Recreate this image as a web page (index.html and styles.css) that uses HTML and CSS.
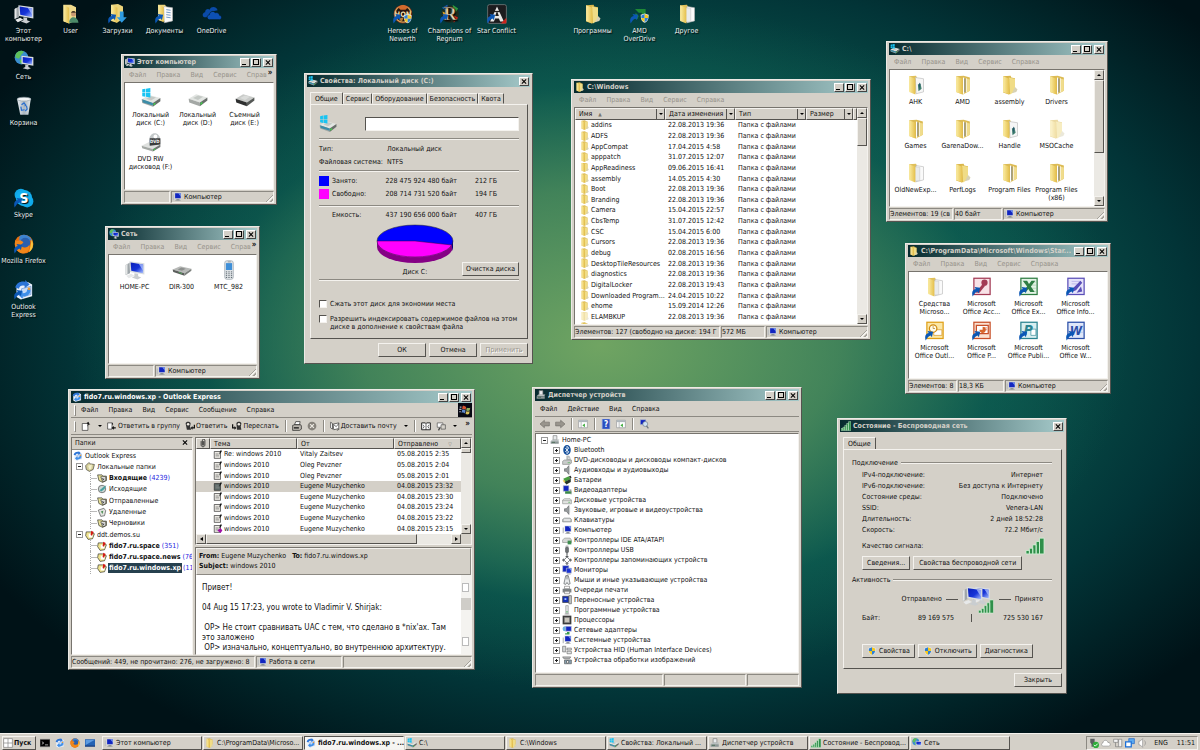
FILE: index.html
```html
<!DOCTYPE html>
<html lang="ru">
<head>
  <meta charset="UTF-8">
  <meta name="viewport" content="width=device-width, initial-scale=1">
  <title>Рабочий стол</title>
  <link rel="stylesheet" href="styles.css">
</head>
<body>

<!-- icons -->
<svg class="sprite" width="0" height="0" aria-hidden="true">
  <defs>
    <linearGradient id="gScreen" x1="0" y1="0" x2="1" y2="1"><stop offset="0" stop-color="#0a1fb8"/><stop offset=".55" stop-color="#1634d8"/><stop offset="1" stop-color="#a9c0ff"/></linearGradient>
    <linearGradient id="gFold" x1="0" y1="0" x2="1" y2="0"><stop offset="0" stop-color="#fbeda4"/><stop offset="1" stop-color="#e4bf4c"/></linearGradient>
    <linearGradient id="gGlass" x1="0" y1="0" x2="1" y2="0"><stop offset="0" stop-color="#e9eef2"/><stop offset=".5" stop-color="#a9b6c0"/><stop offset="1" stop-color="#dfe6ea"/></linearGradient>
  </defs>

  <symbol id="shortcut" viewBox="0 0 32 32"><path d="M1 31c-2-7 0-11 5-12l-2-3 9 1-2 9-2-3c-4 1-5 4-8 8z" fill="#0b57b5"/></symbol>
  <symbol id="shield" viewBox="0 0 16 16"><path d="M8 1l6 2c0 6-1 10-6 12C3 13 2 9 2 3z" fill="#e8e8e8"/><path d="M8 2v6H3V4z" fill="#2b7fd6"/><path d="M8 2l5 2v4H8z" fill="#f6c81e"/><path d="M3 8h5v6C5 13 3.500 11 3 8z" fill="#f6c81e"/><path d="M8 8h5c-.5 3-2 5-5 6z" fill="#2b7fd6"/></symbol>

  <symbol id="pc" viewBox="0 0 32 32">
    <path d="M1 8l7-4v17l-7 3z" fill="#9fa6aa"/><path d="M1 8l3-2v16l-3 2z" fill="#e4e6e6"/>
    <path d="M7 2l24 3v18L8 19z" fill="#d9dde0"/><path d="M9 4l20 3v14L10 17z" fill="url(#gScreen)"/><path d="M22 6l7 1v10z" fill="#b9ccff" opacity=".7"/>
    <path d="M15 21l6 1v4l5 2-6 3-9-3 4-2z" fill="#c9cdd0"/><path d="M2 25l8-3 5 3-9 4z" fill="#e7e9ea"/>
  </symbol>
  <symbol id="net" viewBox="0 0 32 32">
    <circle cx="12" cy="12" r="11" fill="#3b8ed0"/><path d="M3 6c4-6 10-6 13-3l-4 4-4 7-6-2zM9 15l7 1-2 6-4-1z" fill="#5fc05a"/>
    <path d="M12 9l19 2v14l-19-3z" fill="#d9dde0"/><path d="M14 11l15 2v10l-15-3z" fill="url(#gScreen)"/><path d="M18 23l5 1v3l4 2-5 2-8-2 4-2z" fill="#c9cdd0"/>
  </symbol>
  <symbol id="bin" viewBox="0 0 32 32">
    <path d="M5 5l22-1-4 26H10z" fill="url(#gGlass)"/><ellipse cx="16" cy="5" rx="11" ry="3" fill="#f2f5f6" stroke="#8f9ba3"/>
    <path d="M12 14l4-3 3 4-2 1M11 17l1 6 5-1M20 16l1 5-3 3" fill="none" stroke="#2a70cf" stroke-width="2"/>
  </symbol>
  <symbol id="folder" viewBox="0 0 32 32">
    <path d="M5 2l12-1 1 3 6 1v21l-10 5-9-3z" fill="#d9b548"/><path d="M14 4l10 2v20l-8 5z" fill="#f0dc86"/><path d="M5 2l10 4v25L5 27z" fill="url(#gFold)"/><path d="M24 19l4 4-2 4-7 2z" fill="#d8d2b4"/>
  </symbol>
  <symbol id="folder-docs" viewBox="0 0 32 32">
    <path d="M5 2l11-1 2 4-3 24-10-3z" fill="#e0c05a"/><path d="M16 4l12 2v21l-12 3z" fill="#fafafa" stroke="#b9b9b9"/><path d="M14 6l8 1v21l-8 1z" fill="#e9ebec" stroke="#b5b5b5" stroke-width=".6"/><path d="M5 2l10 4v25L5 27z" fill="url(#gFold)"/>
  </symbol>
  <symbol id="folder-app" viewBox="0 0 32 32">
    <path d="M5 2l11-1 2 4-3 24-10-3z" fill="#e0c05a"/><path d="M15 4l13 2v21l-12 3z" fill="#f6f6f6" stroke="#b9b9b9"/><path d="M19 15l4-2 2 9-5 4z" fill="#3f7f6e"/><path d="M21 12l2 3-2 9z" fill="#27506f"/><path d="M5 2l10 4v25L5 27z" fill="url(#gFold)"/>
  </symbol>
  <symbol id="folder-full" viewBox="0 0 32 32">
    <path d="M5 2l12-1 10 3v21l-11 6-11-4z" fill="#dcbb54"/><path d="M16 4l2 .5v25l-2 1zM21 5l1.500.5V27l-1.500 1z" fill="#fff"/><path d="M18 5l2 1v21l-2 1z" fill="#8b8f86"/><path d="M22 6l5 1v18l-5 3z" fill="#f0dc8c"/><path d="M5 2l10 4v25L5 27z" fill="url(#gFold)"/>
  </symbol>
  <symbol id="folder-user" viewBox="0 0 32 32">
    <path d="M4 1h12l8 4v21l-11 5-9-3z" fill="#f0da8c"/><path d="M4 1l9 5v25l-9-4z" fill="url(#gFold)"/><circle cx="20" cy="16" r="4" fill="#c99a72"/><path d="M16 14c1-4 7-4 8 0z" fill="#4a3a26"/><path d="M13 30c0-12 14-12 15 0z" fill="#4b8a68"/>
  </symbol>
  <symbol id="downloads" viewBox="0 0 32 32">
    <path d="M5 1l11-1 8 4v20l-10 6-9-3z" fill="#ecd47a"/><path d="M5 1l10 5v24l-10-4z" fill="url(#gFold)"/><path d="M19 12h6v9h5l-8 9-8-9h5z" fill="#2e9be0"/><use href="#shortcut"/>
  </symbol>
  <symbol id="documents" viewBox="0 0 32 32">
    <path d="M5 1h11l2 3v24l-12-2z" fill="#ecd47a"/><path d="M14 4l14 2v21l-13 3z" fill="#fafafa" stroke="#b9b9b9"/><path d="M18 9l7 1M18 13l7 1M18 17l7 1M18 21l7 1" stroke="#6c93c4" stroke-width="1.500"/><path d="M5 1l9 4v24l-9-4z" fill="url(#gFold)"/><use href="#shortcut"/>
  </symbol>
  <symbol id="onedrive" viewBox="0 0 32 32">
    <path d="M4 21c-4-1-4-7 1-8 0-5 5-6 7-4 3-6 11-5 13 1l-9 2-5 9z" fill="#0a4aa8"/><path d="M12 25c-5 0-5-7 0-8 0-5 7-7 9-3 4-1 7 1 7 4 5 1 4 7 0 7z" fill="#0d50b4" stroke="#021a1c"/>
  </symbol>
  <symbol id="starconf" viewBox="0 0 32 32">
    <rect x="1" y="1" width="30" height="30" rx="3" fill="#1c1c1e" stroke="#909090"/><path d="M16 4l11 24h-6l-2-5h-6l-2 5H5z" fill="#e9e9e6"/><path d="M16 11l3 8h-6z" fill="#1c1c1e"/><path d="M22 31h9v-9z" fill="#c9251c"/><path d="M7 12h18" stroke="#1c1c1e" stroke-width="2"/><use href="#shortcut"/>
  </symbol>
  <symbol id="amd" viewBox="0 0 32 32"><path d="M8 8h17v16l-6-6v-4h-5z" fill="#1f8a36"/><path d="M9 14l5 5-2 5H8z" fill="#1f8a36"/><use href="#shortcut"/><use href="#shield" x="15" y="14" width="17" height="17"/></symbol>
  <symbol id="firefox" viewBox="0 0 32 32"><circle cx="16" cy="16" r="15" fill="#e8700e"/><path d="M9 3c9-5 19 1 20 9-2-3-5-2-6 1-3-3-9-1-10 3-2-1-5-2-5-4z" fill="#3d83cf"/><circle cx="18" cy="14" r="8" fill="#2a5fae"/><path d="M2 9c1 3 5 2 7 1 3 0 4 2 6 3-1 3-5 3-4 6 3 4 10 4 13-1 2 7-3 13-10 13C4 30 0 19 2 9z" fill="#f0861a"/><path d="M28 9c4 6 3 15-4 20 2-6 3-13 4-20z" fill="#f9c63d"/></symbol>
  <symbol id="oexpress" viewBox="0 0 32 32"><path d="M4 9l18-6 7 4v19l-18 5-7-4z" fill="#e9f0fb"/><path d="M12 14l15-4v13l-15 5z" fill="#c7dbf6" stroke="#5d8cd0"/><path d="M2 12C4 4 12 1 18 3V0l7 7-8 6V9c-5-1-8 0-9 5z" fill="#2b74d6"/><path d="M26 14c2 8-5 13-12 12v4l-8-7 8-6v4c5 0 7-2 7-6z" fill="#3f8fe8"/><path d="M22 12h4v4h-4z" fill="#e69a3a"/></symbol>

  <symbol id="drive" viewBox="0 0 32 32"><path d="M1 17l12-7 18 5-12 8z" fill="#e2e5e2"/><path d="M1 17l18 6v6L2 23z" fill="#a4a8a5"/><path d="M19 23l12-8v5l-12 9z" fill="#686d6a"/><path d="M8 16l8-4 8 2-8 5z" fill="#c4c9c5"/><path d="M20 24l3-2v3l-3 2z" fill="#3fd24a"/></symbol>
  <symbol id="windrive" viewBox="0 0 32 32"><use href="#drive" y="1"/><path d="M2 18l17 6v4L3 23z" fill="#3c8da8"/><path d="M2 2l5-1v6H2zM8 1l7-1v7H8zM2 8h5v6l-5-1zM8 8h7v7l-7-1z" fill="#19c3f2"/></symbol>
  <symbol id="drive-dark" viewBox="0 0 32 32"><path d="M1 17l12-7 18 5-12 8z" fill="#c9cbc9"/><path d="M1 17l18 6v6L2 23z" fill="#2e2f2f"/><path d="M19 23l12-8v5l-12 9z" fill="#555856"/><path d="M8 16l8-4 8 2-8 5z" fill="#dadcda"/></symbol>
  <symbol id="router" viewBox="0 0 32 32"><path d="M1 15l12-5 18 4-11 7z" fill="#b8bab8"/><path d="M1 15l19 6v4L2 19z" fill="#5b5e5c"/><path d="M20 21l11-7v3l-11 8z" fill="#7c807d"/><path d="M9 15l6-3 7 2-6 3z" fill="#8d908e"/><path d="M11 19l5 2v1l-5-2z" fill="#4bdc5c"/></symbol>
  <symbol id="phone" viewBox="0 0 32 32"><rect x="9" y="1" width="14" height="30" rx="4" fill="#dfe3e6" stroke="#98a2aa"/><rect x="11" y="5" width="10" height="11" fill="#3f8fd8"/><path d="M11 19h10M11 22h10M11 25h10M11 28h10" stroke="#5a646c" stroke-width="1.500" stroke-dasharray="2 2"/><path d="M14 3h5" stroke="#6c757d"/></symbol>

  <symbol id="o-access" viewBox="0 0 32 32"><rect x="3" y="2" width="26" height="26" fill="#f8e2e7" stroke="#a33b55" stroke-width="2"/><circle cx="20" cy="9" r="5" fill="#a33b55"/><path d="M17 11L6 25h6l9-11z" fill="#a33b55"/><use href="#shortcut"/></symbol>
  <symbol id="o-excel" viewBox="0 0 32 32"><rect x="3" y="2" width="26" height="26" fill="#e4f3e6" stroke="#2e7d43" stroke-width="2"/><path d="M20 8h7M20 13h7M20 18h7M20 23h7" stroke="#9ccaa4"/><path d="M6 6h7l3 5 4-5h6l-7 9 6 9h-7l-3-5-4 5H6l7-9z" fill="#2e7d43"/><use href="#shortcut"/></symbol>
  <symbol id="o-info" viewBox="0 0 32 32"><rect x="3" y="2" width="26" height="26" fill="#e6e3fa" stroke="#5a4eb8" stroke-width="2"/><path d="M9 7h14M9 11h9" stroke="#a9a2e0"/><path d="M23 6l3 3-10 12-5 2 1-6zM24 15l2 8-9 2z" fill="#5a4eb8"/><use href="#shortcut"/></symbol>
  <symbol id="o-outlook" viewBox="0 0 32 32"><rect x="3" y="2" width="26" height="26" fill="#fbe7a6" stroke="#e0a018" stroke-width="2"/><path d="M14 14h13v9H14z" fill="#fff" stroke="#d08a10"/><circle cx="13" cy="12" r="6" fill="#fffbe8" stroke="#d08a10" stroke-width="2"/><path d="M13 8v4h3" stroke="#a86c08" fill="none"/><use href="#shortcut"/></symbol>
  <symbol id="o-ppt" viewBox="0 0 32 32"><rect x="3" y="2" width="26" height="26" fill="#fbe2d2" stroke="#c8502a" stroke-width="2"/><path d="M7 7h19v13H7z" fill="#fff" stroke="#c8502a" stroke-width="2"/><path d="M17 9a5 5 0 1 1-5 5h5z" fill="#d9682c"/><path d="M19 11h5M20 14h4" stroke="#c8502a"/><use href="#shortcut"/></symbol>

  <symbol id="monitor" viewBox="0 0 16 16"><path d="M1 4h2v9H1z" fill="#b9bdc0"/><path d="M4 1h11v10H4z" fill="#d5d9dc"/><path d="M5 2h9v8H5z" fill="#1226c0"/><path d="M10 2h4v5z" fill="#7d9cf0"/><path d="M7 11h5v2H7zM5 13h9v1H5z" fill="#8f9498"/></symbol>
  <symbol id="signal" viewBox="0 0 16 16"><path d="M0 12h3v3H0zM3 10h3v5H3zM6 7h3v8H6zM9 4h3v11H9zM12 1h4v14h-4z" fill="#2f8f4a" stroke="#d3f3d8" stroke-width=".7"/></symbol>
  <symbol id="devroot" viewBox="0 0 16 16"><path d="M5 1h6v7H5z" fill="#e8ebec" stroke="#777"/><path d="M1 9l3-2h11l-2 3z" fill="#b9c0c0"/><path d="M1 10h13v4H1z" fill="#8b9696"/><path d="M3 11h5v1H3z" fill="#2d5a38"/></symbol>
  <symbol id="winlogo" viewBox="0 0 16 16"><path d="M1 1h14v14H1z" fill="#fff" stroke="#777"/><path d="M8 1v14M1 8h14" stroke="#777"/></symbol>

  <symbol id="d-bt" viewBox="0 0 16 16"><ellipse cx="8" cy="8" rx="6" ry="8" fill="#16509c"/><path d="M5 5l6 6-3 3V2l3 3-6 6" fill="none" stroke="#fff" stroke-width="1.200"/></symbol>
  <symbol id="d-dvd" viewBox="0 0 16 16"><path d="M7 1c5-1 7 2 7 8H7z" fill="#b8bcbc"/><circle cx="11" cy="5" r="1" fill="#fff"/><path d="M1 10l3-2h11v5l-3 2H1z" fill="#c9cccb" stroke="#838786"/><path d="M9 12h4v1H9z" fill="#3faf48"/></symbol>
  <symbol id="d-audio" viewBox="0 0 16 16"><path d="M4 6h3l4-5v14l-4-5H4z" fill="#999d9f" stroke="#5d6163"/><path d="M11 3l2 1v8l-2 1z" fill="#c9cdce"/></symbol>
  <symbol id="d-batt" viewBox="0 0 16 16"><path d="M2 6l9-4 3 4-9 5z" fill="#4a9f40"/><path d="M4 11l10-5v5l-7 4z" fill="#26352a"/><path d="M1 8l4 1-1 4z" fill="#e4c13a"/><path d="M11 2l3-1 1 3-1 2z" fill="#333"/></symbol>
  <symbol id="d-video" viewBox="0 0 16 16"><path d="M2 1h9v9H2z" fill="#1226c0" stroke="#c4c8cc"/><path d="M5 10h10v4H5z" fill="#3a8a48"/><path d="M12 7h3v8h-1V9h-2z" fill="#888"/></symbol>
  <symbol id="d-mon" viewBox="0 0 16 16"><path d="M1 1h10v10H1z" fill="#1226c0" stroke="#c4c8cc"/><path d="M7 5h8v8H7z" fill="#1a34d4" stroke="#c4c8cc"/><path d="M11 5h4v4z" fill="#7d9cf0"/><path d="M8 14h6v1H8z" fill="#888"/></symbol>
  <symbol id="d-disk" viewBox="0 0 16 16"><path d="M1 8l3-2h9l2 2v6H1z" fill="#e2e4e2" stroke="#8a8e8b"/><path d="M1 9h14" stroke="#9ba09c"/><path d="M10 11h3v1h-3z" fill="#3faf48"/></symbol>
  <symbol id="d-key" viewBox="0 0 16 16"><path d="M1 7l3-2h9l2 2v4H1z" fill="#c0c4c4" stroke="#7b8080"/><path d="M3 7h10M3 9h10" stroke="#fff"/></symbol>
  <symbol id="d-ide" viewBox="0 0 16 16"><path d="M1 8l3-3h9l2 3v4H1z" fill="#d6d8d6" stroke="#8a8e8b"/><path d="M9 9h6v6H9z" fill="#3f8f50"/></symbol>
  <symbol id="d-usb" viewBox="0 0 16 16"><path d="M6 1h4v3h1v7l-2 2v3H7v-3l-2-2V4h1z" fill="#6d7173"/><path d="M7 2h2v1H7z" fill="#fff"/></symbol>
  <symbol id="d-stor" viewBox="0 0 16 16"><path d="M8 0l3 3H5zM8 16l-3-3h6zM0 8l3-3v6zM16 8l-3 3V5z" fill="#55595c"/><path d="M8 3l5 5-5 5-5-5z" fill="none" stroke="#6a6e71" stroke-width="1.500"/></symbol>
  <symbol id="d-mouse" viewBox="0 0 16 16"><path d="M6 1h4l1 4 2 9-3 1-2-3-2 3-3-1 2-9z" fill="#e9ebec" stroke="#4c5053"/><path d="M8 1v6" stroke="#4c5053"/></symbol>
  <symbol id="d-print" viewBox="0 0 16 16"><path d="M4 2h8v4H4z" fill="#fff" stroke="#777"/><path d="M1 6h14v6H1z" fill="#7d8284"/><path d="M4 10h8v4H4z" fill="#eee" stroke="#777"/></symbol>
  <symbol id="d-port" viewBox="0 0 16 16"><path d="M1 2h10v10H1z" fill="#1430b4" stroke="#333"/><path d="M11 1h4v13h-4z" fill="#c7cacc" stroke="#555"/><path d="M4 5h3v3H4z" fill="#9dc0ff"/></symbol>
  <symbol id="d-soft" viewBox="0 0 16 16"><path d="M6 1h4v13H6z" fill="#e4e6e7" stroke="#8c9092"/><path d="M7 10h2v2H7z" fill="#4ab05a"/><path d="M4 14h8v1H4z" fill="#999"/></symbol>
  <symbol id="d-cpu" viewBox="0 0 16 16"><path d="M1 1h14v14H1z" fill="#3b3b3b"/><path d="M4 4h8v8H4z" fill="#c9c5bb" stroke="#888"/></symbol>
  <symbol id="d-netad" viewBox="0 0 16 16"><circle cx="5" cy="6" r="4" fill="#6ab0dd"/><path d="M6 2h9v8H6z" fill="#1226c0" stroke="#ccd"/><path d="M8 11h4v4H5v-2h3z" fill="#3a9a4c"/></symbol>
  <symbol id="d-hid" viewBox="0 0 16 16"><path d="M1 2h5v9H1z" fill="#d2d5d6" stroke="#666"/><path d="M8 5h7v3H8zM8 10h7v4H8z" fill="#e4e6e7" stroke="#666"/></symbol>
  <symbol id="d-img" viewBox="0 0 16 16"><path d="M1 3h13l-2 3H3z" fill="#b9bcbd" stroke="#666"/><path d="M4 8h11v6H4z" fill="#8aa4b4" stroke="#555"/><circle cx="9" cy="11" r="2" fill="#fff" stroke="#333"/></symbol>

  <symbol id="t-new" viewBox="0 0 16 16"><path d="M2 4h9v11H2z" fill="#fff" stroke="#222"/><path d="M12 1l1 3 2 1-3 1-2 3 1-4-2-2z" fill="#111"/></symbol>
  <symbol id="t-grp" viewBox="0 0 16 16"><path d="M1 3h7v10H1z" fill="#fff" stroke="#222"/><path d="M8 2l2 3-2 1zM7 11l4-3v2h3v2h-3v2z" fill="#111"/></symbol>
  <symbol id="t-reply" viewBox="0 0 16 16"><path d="M1 4c0-4 8-4 8 0L8 9l2 5H3z" fill="#333"/><circle cx="5" cy="5" r="2" fill="#f0ece4"/><path d="M9 11l3-3v2h2V6h2v6h-4v2z" fill="#111"/></symbol>
  <symbol id="t-fwd" viewBox="0 0 16 16"><path d="M7 4c0-4 8-4 8 0l-1 5 1 5H8z" fill="#333"/><circle cx="11" cy="5" r="2" fill="#f0ece4"/><path d="M7 11L4 8v2H2V5H0v7h4v2z" fill="#111"/></symbol>
  <symbol id="t-print" viewBox="0 0 16 16"><path d="M4 6l2-5h7l-1 5z" fill="#fff" stroke="#111"/><path d="M1 7l3-1h10l1 2v5l-3 2H1z" fill="#b9b5ad" stroke="#111"/><path d="M3 11h8" stroke="#111" stroke-width="2"/></symbol>
  <symbol id="t-stop" viewBox="0 0 16 16"><circle cx="8" cy="8" r="7" fill="#86827b"/><path d="M5 5l6 6M11 5l-6 6" stroke="#ece9e2" stroke-width="2"/></symbol>
  <symbol id="t-mail" viewBox="0 0 16 16"><path d="M1 2l3 2v9l-3-2z" fill="#fff" stroke="#222"/><path d="M5 5l9-2v9l-8 2z" fill="#fff" stroke="#222"/><path d="M6 6l4 3 4-5M11 15l4-2" stroke="#222" fill="none"/></symbol>
  <symbol id="t-book" viewBox="0 0 16 16"><path d="M1 3h6l1 1 1-1h6v11H1z" fill="#fff" stroke="#111" stroke-width="1.400"/><path d="M8 4v10M3 6l2 3-2 3M13 6l-2 3 2 3" stroke="#111" fill="none"/></symbol>
  <symbol id="t-find" viewBox="0 0 16 16"><path d="M2 3h9v7H2z" fill="#fff" stroke="#444"/><path d="M8 6h7v7H8z" fill="#d5d2ca" stroke="#444"/><path d="M6 11l-2 4" stroke="#444" stroke-width="2"/></symbol>
  <symbol id="t-left" viewBox="0 0 16 16"><path d="M0 8l7-6v3h8v6H7v3z" fill="#99958d" stroke="#706d67"/></symbol>
  <symbol id="t-right" viewBox="0 0 16 16"><path d="M16 8L9 2v3H1v6h8v3z" fill="#99958d" stroke="#706d67"/></symbol>
  <symbol id="t-pane" viewBox="0 0 16 16"><path d="M1 2h14v12H1z" fill="#fff" stroke="#8b8f92"/><path d="M1 2h14v3H1z" fill="#aeb6bc"/><path d="M5 5v9" stroke="#8b8f92"/><path d="M7 10l4-3v6z" fill="#3aaa3a"/></symbol>
  <symbol id="t-scan" viewBox="0 0 16 16"><path d="M2 1h9v8H2z" fill="#1226c0" stroke="#c4c8cc"/><circle cx="10" cy="8" r="4" fill="#cfe2f4" stroke="#6b7680"/><path d="M12 11l3 4" stroke="#6b7680" stroke-width="2"/></symbol>
  <symbol id="m-msg" viewBox="0 0 16 16"><path d="M2 4h10v11H2z" fill="#eceae4" stroke="#222"/><path d="M4 8h5M4 11h6" stroke="#555"/><path d="M13 1l1 3-4 5 1-5z" fill="#111"/></symbol>
  <symbol id="m-cur" viewBox="0 0 16 16"><path d="M2 4h10v11H2z" fill="#5d6a68" stroke="#222"/><path d="M4 8h5M4 11h6" stroke="#999"/><path d="M13 1l1 3-4 5 1-5z" fill="#111"/></symbol>
  <symbol id="f-local" viewBox="0 0 16 16"><path d="M1 6l5-5 3 2 6 1-2 8-6 3-5-3z" fill="#d5cf9a" stroke="#33322a"/><path d="M5 6l6-2-1 7-3 1z" fill="#f4f1cf"/></symbol>
  <symbol id="f-box" viewBox="0 0 16 16"><path d="M1 3h7l2 2h5v7l-6 3-6-3z" fill="#e9e29a" stroke="#22221c"/><path d="M6 6h8v6l-5 2z" fill="#fff" stroke="#22221c"/><path d="M8 8l3 3M11 8v3H8" stroke="#222" fill="none"/></symbol>
  <symbol id="f-out" viewBox="0 0 16 16"><circle cx="8" cy="8" r="6" fill="#cfd8d4" stroke="#444"/><path d="M4 10l6-5 5-3-3 6-5 4z" fill="#49a0a0"/></symbol>
  <symbol id="f-del" viewBox="0 0 16 16"><path d="M2 5l9-3 3 4-2 8-6 1z" fill="#e2e4e0" stroke="#444"/><path d="M6 7l4-1-1 5z" fill="#4d8f55"/></symbol>
  <symbol id="f-news" viewBox="0 0 16 16"><path d="M2 3h7l6 3-3 8-7 1-4-6z" fill="#f0e48e" stroke="#22221c"/><path d="M6 6h6v6H6z" fill="#fff"/><path d="M10 1l4 2-3 6-2-1z" fill="#d21a14"/></symbol>
  <symbol id="flag" viewBox="0 0 24 24"><rect width="24" height="24" fill="#060812"/><path d="M8 5c2-1 4 0 6 2l-1 5c-2-2-4-2-6-1z" fill="#d6522d"/><path d="M15 8c2 1 4 1 6 0l-1 5c-2 1-4 1-6 0z" fill="#8fae5a"/><path d="M7 12c2-1 4-1 6 1l-1 5c-2-2-4-2-6-1z" fill="#5c86c9"/><path d="M14 14c2 1 4 1 6 0l-1 5c-2 1-4 1-6 0z" fill="#d9c15a"/><path d="M3 7h3M2 11h4M2 15h3" stroke="#aab" stroke-width="2"/></symbol>
</svg>

<main class="desktop">

  <div class="shortcuts">
    <a href="#" class="item c1"><svg><use href="#pc"/></svg>Этот компьютер</a>
    <a href="#" class="item c2"><svg><use href="#folder-user"/></svg>User</a>
    <a href="#" class="item c3"><svg><use href="#downloads"/></svg>Загрузки</a>
    <a href="#" class="item c4"><svg><use href="#documents"/></svg>Документы</a>
    <a href="#" class="item c5"><svg><use href="#onedrive"/></svg>OneDrive</a>
    <a href="#" class="item c7"><svg viewBox="0 0 32 32"><circle cx="16" cy="16" r="15" fill="#7b2a16"/><circle cx="16" cy="16" r="13" fill="#271610" stroke="#d5a35a" stroke-width="2"/><path d="M8 5c5-4 11-4 16 0l-4 4h-8z" fill="#d26a2c"/><text x="16" y="20" font-size="12" font-weight="bold" text-anchor="middle" fill="#f4dfa8">HON</text><path d="M9 23l8-2-3 8z" fill="#b57c35"/><use href="#shortcut"/><use href="#shield" x="15" y="15" width="17" height="17"/></svg>Heroes of Newerth</a>
    <a href="#" class="item c8"><svg viewBox="0 0 32 32"><circle cx="16" cy="16" r="14" fill="#1e2d20"/><path d="M3 6l9-5v11z" fill="#1a62c8"/><path d="M20 1l9 6-5 8z" fill="#2d9a40"/><path d="M22 18l7 4-7 8z" fill="#d0271b"/><path d="M4 12l9 4-6 8z" fill="#d5a020"/><text x="16" y="26" font-size="29" font-weight="bold" text-anchor="middle" fill="#f2e6c6" stroke="#3c1c0c" stroke-width=".5" class="serif">R</text><use href="#shortcut"/></svg>Champions of Regnum</a>
    <a href="#" class="item c9"><svg><use href="#starconf"/></svg>Star Conflict</a>
    <a href="#" class="item c11"><svg><use href="#folder"/></svg>Программы</a>
    <a href="#" class="item c12"><svg><use href="#amd"/></svg>AMD OverDrive</a>
    <a href="#" class="item c13"><svg><use href="#folder-docs"/></svg>Другое</a>
    <a href="#" class="item c1 r2"><svg><use href="#net"/></svg>Сеть</a>
    <a href="#" class="item c1 r3"><svg><use href="#bin"/></svg>Корзина</a>
    <a href="#" class="item c1 r5"><svg viewBox="0 0 32 32"><circle cx="11" cy="11" r="10" fill="#10a8e8"/><circle cx="21" cy="21" r="10" fill="#10a8e8"/><circle cx="16" cy="16" r="13" fill="#12aeee"/><text x="16" y="24" font-size="23" font-weight="bold" text-anchor="middle" fill="#fff">S</text><use href="#shortcut"/></svg>Skype</a>
    <a href="#" class="item c1 r6"><svg viewBox="0 0 32 32"><use href="#firefox"/><use href="#shortcut"/></svg>Mozilla Firefox</a>
    <a href="#" class="item c1 r7"><svg viewBox="0 0 32 32"><use href="#oexpress"/><use href="#shortcut"/></svg>Outlook Express</a>
  </div>

  <!-- Этот компьютер -->
  <section class="window win-computer">
    <header class="title"><svg><use href="#pc"/></svg><h2>Этот компьютер</h2><button class="min" aria-label="Свернуть"></button><button class="max" aria-label="Развернуть"></button><button class="close" aria-label="Закрыть"></button></header>
    <nav class="menu dim"><button>Файл</button><button>Правка</button><button>Вид</button><button>Сервис</button><button>Справ</button><button class="more">»</button></nav>
    <div class="view icons">
      <a href="#" class="item"><svg><use href="#windrive"/></svg>Локальный диск (C:)</a>
      <a href="#" class="item"><svg><use href="#drive"/></svg>Локальный диск (D:)</a>
      <a href="#" class="item"><svg><use href="#drive-dark"/></svg>Съемный диск (E:)</a>
      <a href="#" class="item"><svg viewBox="0 0 32 32"><path d="M1 22l12-6 18 4-12 7z" fill="#dfe1df"/><path d="M1 22l18 5v4L2 26z" fill="#a4a8a5"/><path d="M19 27l12-7v4l-12 7z" fill="#6f7472"/><path d="M13 14c0-16 18-16 18 0v5l-18 2z" fill="#c3c8c9"/><path d="M14 10h17v10l-17 2z" fill="#3a3c3d"/><circle cx="23" cy="7" r="3" fill="#fff"/><text x="22" y="18" font-size="7" font-weight="bold" text-anchor="middle" fill="#fff">DVD</text><path d="M20 28l3-2v2l-3 2z" fill="#3fd24a"/></svg>DVD RW дисковод (F:)</a>
    </div>
    <footer class="status"><span></span><span><svg><use href="#monitor"/></svg>Компьютер<i class="grip"></i></span></footer>
  </section>

  <!-- Сеть -->
  <section class="window win-network">
    <header class="title"><svg><use href="#net"/></svg><h2>Сеть</h2><button class="min" aria-label="Свернуть"></button><button class="max" aria-label="Развернуть"></button><button class="close" aria-label="Закрыть"></button></header>
    <nav class="menu dim"><button>Файл</button><button>Правка</button><button>Вид</button><button>Сервис</button><button>Справ</button><button class="more">»</button></nav>
    <div class="view icons">
      <a href="#" class="item"><svg><use href="#pc"/></svg>HOME-PC</a>
      <a href="#" class="item"><svg><use href="#router"/></svg>DIR-300</a>
      <a href="#" class="item"><svg><use href="#phone"/></svg>МТС_982</a>
    </div>
    <footer class="status"><span></span><span><svg><use href="#monitor"/></svg>Компьютер<i class="grip"></i></span></footer>
  </section>

  <!-- Свойства диска -->
  <section class="window dialog win-props">
    <header class="title"><svg><use href="#windrive"/></svg><h2>Свойства: Локальный диск (C:)</h2><button class="close" aria-label="Закрыть"></button></header>
    <div class="tabs"><button class="on">Общие</button><button>Сервис</button><button>Оборудование</button><button>Безопасность</button><button>Квота</button></div>
    <div class="panel">
      <div class="vol"><svg><use href="#windrive"/></svg><input type="text" aria-label="Метка тома"></div>
      <hr>
      <dl class="facts"><dt>Тип:</dt><dd>Локальный диск</dd><dt>Файловая система:</dt><dd>NTFS</dd></dl>
      <hr>
      <table class="usage">
        <tr><td><i class="used"></i></td><th>Занято:</th><td>228 475 924 480 байт</td><td>212 ГБ</td></tr>
        <tr><td><i class="free"></i></td><th>Свободно:</th><td>208 714 731 520 байт</td><td>194 ГБ</td></tr>
      </table>
      <hr>
      <table class="usage total"><tr><td></td><th>Емкость:</th><td>437 190 656 000 байт</td><td>407 ГБ</td></tr></table>
      <div class="chart">
        <figure>
          <svg viewBox="0 0 78 40">
            <path d="M1 17v6a38 16 0 0 0 76 0v-6z" fill="#850085"/><path d="M76 20v7l1-4v-6z" fill="#000080"/>
            <ellipse cx="39" cy="17" rx="38" ry="16" fill="#00f"/><path d="M1 17h38l37 4A38 16 0 0 1 1 17z" fill="#f0f"/>
            <path d="M1 17h38l37 4" fill="none" stroke="#3a003a" stroke-width=".5"/><ellipse cx="39" cy="17" rx="38" ry="16" fill="none" stroke="#222" stroke-width=".5"/>
          </svg>
          <figcaption>Диск C:</figcaption>
        </figure>
        <button class="btn">Очистка диска</button>
      </div>
      <hr>
      <label class="check"><input type="checkbox"><span>Сжать этот диск для экономии места</span></label>
      <label class="check"><input type="checkbox"><span>Разрешить индексировать содержимое файлов на этом диске в дополнение к свойствам файла</span></label>
    </div>
    <div class="actions"><button class="btn">ОК</button><button class="btn">Отмена</button><button class="btn" disabled>Применить</button></div>
  </section>

  <!-- C:\Windows -->
  <section class="window win-windows">
    <header class="title"><svg><use href="#folder"/></svg><h2>C:\Windows</h2><button class="min" aria-label="Свернуть"></button><button class="max" aria-label="Развернуть"></button><button class="close" aria-label="Закрыть"></button></header>
    <nav class="menu dim"><button>Файл</button><button>Правка</button><button>Вид</button><button>Сервис</button><button>Справка</button></nav>
    <div class="view scrolled">
      <div class="clip">
      <table class="list files">
        <thead><tr><th>Имя <small>▲</small><b></b></th><th>Дата изменения<b></b></th><th>Тип<b></b></th><th>Размер<b></b></th><th></th></tr></thead>
        <tbody>
          <tr><td><svg><use href="#folder"/></svg>addins</td><td>22.08.2013 19:36</td><td>Папка с файлами</td><td></td><td></td></tr>
          <tr><td><svg><use href="#folder"/></svg>ADFS</td><td>22.08.2013 19:36</td><td>Папка с файлами</td><td></td><td></td></tr>
          <tr><td><svg><use href="#folder"/></svg>AppCompat</td><td>17.04.2015 4:58</td><td>Папка с файлами</td><td></td><td></td></tr>
          <tr><td><svg><use href="#folder"/></svg>apppatch</td><td>31.07.2015 12:07</td><td>Папка с файлами</td><td></td><td></td></tr>
          <tr><td><svg><use href="#folder"/></svg>AppReadiness</td><td>09.06.2015 16:41</td><td>Папка с файлами</td><td></td><td></td></tr>
          <tr><td><svg><use href="#folder"/></svg>assembly</td><td>14.05.2015 4:30</td><td>Папка с файлами</td><td></td><td></td></tr>
          <tr><td><svg><use href="#folder"/></svg>Boot</td><td>22.08.2013 19:36</td><td>Папка с файлами</td><td></td><td></td></tr>
          <tr><td><svg><use href="#folder"/></svg>Branding</td><td>22.08.2013 19:36</td><td>Папка с файлами</td><td></td><td></td></tr>
          <tr><td><svg><use href="#folder"/></svg>Camera</td><td>15.04.2015 22:57</td><td>Папка с файлами</td><td></td><td></td></tr>
          <tr><td><svg><use href="#folder"/></svg>CbsTemp</td><td>31.07.2015 12:42</td><td>Папка с файлами</td><td></td><td></td></tr>
          <tr><td><svg><use href="#folder"/></svg>CSC</td><td>15.04.2015 6:00</td><td>Папка с файлами</td><td></td><td></td></tr>
          <tr><td><svg><use href="#folder"/></svg>Cursors</td><td>22.08.2013 19:36</td><td>Папка с файлами</td><td></td><td></td></tr>
          <tr><td><svg><use href="#folder"/></svg>debug</td><td>02.08.2015 16:56</td><td>Папка с файлами</td><td></td><td></td></tr>
          <tr><td><svg><use href="#folder"/></svg>DesktopTileResources</td><td>22.08.2013 19:36</td><td>Папка с файлами</td><td></td><td></td></tr>
          <tr><td><svg><use href="#folder"/></svg>diagnostics</td><td>22.08.2013 19:36</td><td>Папка с файлами</td><td></td><td></td></tr>
          <tr><td><svg><use href="#folder"/></svg>DigitalLocker</td><td>22.08.2013 19:43</td><td>Папка с файлами</td><td></td><td></td></tr>
          <tr><td><svg><use href="#folder"/></svg>Downloaded Program...</td><td>24.04.2015 10:22</td><td>Папка с файлами</td><td></td><td></td></tr>
          <tr><td><svg><use href="#folder"/></svg>ehome</td><td>15.09.2014 12:26</td><td>Папка с файлами</td><td></td><td></td></tr>
          <tr><td><svg class="faded"><use href="#folder"/></svg>ELAMBKUP</td><td>22.08.2013 19:36</td><td>Папка с файлами</td><td></td><td></td></tr>
          <tr><td><svg><use href="#folder"/></svg></td><td></td><td></td><td></td><td></td></tr>
        </tbody>
      </table>
      </div>
      <div class="scroll"><button class="up" aria-label="Вверх"></button><i class="thumb short"></i><button class="down" aria-label="Вниз"></button></div>
    </div>
    <footer class="status"><span>Элементов: 127 (свободно на диске: 194 Г</span><span>572 МБ</span><span><svg><use href="#monitor"/></svg>Компьютер<i class="grip"></i></span></footer>
  </section>

  <!-- C:\ -->
  <section class="window win-c">
    <header class="title"><svg><use href="#windrive"/></svg><h2>C:\</h2><button class="min" aria-label="Свернуть"></button><button class="max" aria-label="Развернуть"></button><button class="close" aria-label="Закрыть"></button></header>
    <nav class="menu dim"><button>Файл</button><button>Правка</button><button>Вид</button><button>Сервис</button><button>Справка</button></nav>
    <div class="view scrolled">
      <div class="icons clip">
        <a href="#" class="item"><svg><use href="#folder-app"/></svg>AHK</a>
        <a href="#" class="item"><svg><use href="#folder-full"/></svg>AMD</a>
        <a href="#" class="item"><svg><use href="#folder"/></svg>assembly</a>
        <a href="#" class="item"><svg><use href="#folder-full"/></svg>Drivers</a>
        <a href="#" class="item"><svg><use href="#folder-full"/></svg>Games</a>
        <a href="#" class="item"><svg><use href="#folder-full"/></svg>GarenaDow...</a>
        <a href="#" class="item"><svg><use href="#folder-app"/></svg>Handle</a>
        <a href="#" class="item"><svg class="faded"><use href="#folder"/></svg>MSOCache</a>
        <a href="#" class="item"><svg><use href="#folder-docs"/></svg>OldNewExp...</a>
        <a href="#" class="item"><svg><use href="#folder"/></svg>PerfLogs</a>
        <a href="#" class="item"><svg><use href="#folder-full"/></svg>Program Files</a>
        <a href="#" class="item"><svg><use href="#folder-full"/></svg>Program Files (x86)</a>
      </div>
      <div class="scroll"><button class="up" aria-label="Вверх"></button><i class="thumb long"></i><button class="down" aria-label="Вниз"></button></div>
    </div>
    <footer class="status"><span>Элементов: 19 (св</span><span>40 байт</span><span><svg><use href="#monitor"/></svg>Компьютер<i class="grip"></i></span></footer>
  </section>

  <!-- Меню Пуск -->
  <section class="window win-start">
    <header class="title"><svg><use href="#folder"/></svg><h2>C:\ProgramData\Microsoft\Windows\Star...</h2><button class="min" aria-label="Свернуть"></button><button class="max" aria-label="Развернуть"></button><button class="close" aria-label="Закрыть"></button></header>
    <nav class="menu dim"><button>Файл</button><button>Правка</button><button>Вид</button><button>Сервис</button><button>Справка</button></nav>
    <div class="view icons">
      <a href="#" class="item"><svg><use href="#folder-docs"/></svg>Средства Microso...</a>
      <a href="#" class="item"><svg><use href="#o-access"/></svg>Microsoft Office Acc...</a>
      <a href="#" class="item"><svg><use href="#o-excel"/></svg>Microsoft Office Ex...</a>
      <a href="#" class="item"><svg><use href="#o-info"/></svg>Microsoft Office Info...</a>
      <a href="#" class="item"><svg><use href="#o-outlook"/></svg>Microsoft Office Outl...</a>
      <a href="#" class="item"><svg><use href="#o-ppt"/></svg>Microsoft Office P...</a>
      <a href="#" class="item"><svg viewBox="0 0 32 32"><rect x="3" y="2" width="26" height="26" fill="#d8eef0" stroke="#2b8390" stroke-width="2"/><path d="M19 13h8v10h-8z" fill="#fff" stroke="#2b8390"/><text x="15" y="22" font-size="22" font-weight="bold" font-style="italic" text-anchor="middle" fill="#2b8390">P</text><use href="#shortcut"/></svg>Microsoft Office Publi...</a>
      <a href="#" class="item"><svg viewBox="0 0 32 32"><rect x="3" y="2" width="26" height="26" fill="#dfe7f9" stroke="#2b4fa8" stroke-width="2"/><path d="M20 8h7M20 13h7M20 18h7" stroke="#a4b8e4"/><text x="16" y="22" font-size="20" font-weight="bold" font-style="italic" text-anchor="middle" fill="#2b4fa8">W</text><use href="#shortcut"/></svg>Microsoft Office W...</a>
    </div>
    <footer class="status"><span>Элементов: 8</span><span>18,3 КБ</span><span><svg><use href="#monitor"/></svg>Компьютер<i class="grip"></i></span></footer>
  </section>

  <!-- Outlook Express -->
  <section class="window active win-outlook">
    <header class="title"><svg><use href="#oexpress"/></svg><h2>fido7.ru.windows.xp - Outlook Express</h2><button class="min" aria-label="Свернуть"></button><button class="max" aria-label="Развернуть"></button><button class="close" aria-label="Закрыть"></button></header>
    <div class="bar"><i class="handle"></i><nav class="menu"><button>Файл</button><button>Правка</button><button>Вид</button><button>Сервис</button><button>Сообщение</button><button>Справка</button></nav><svg class="logo"><use href="#flag"/></svg></div>
    <div class="bar tools">
      <i class="handle"></i>
      <button aria-label="Создать"><svg><use href="#t-new"/></svg><b></b></button>
      <button><svg><use href="#t-grp"/></svg>Ответить в группу</button>
      <button><svg><use href="#t-reply"/></svg>Ответить</button>
      <button><svg><use href="#t-fwd"/></svg>Переслать</button>
      <i class="sep"></i>
      <button aria-label="Печать"><svg><use href="#t-print"/></svg></button>
      <button aria-label="Стоп"><svg><use href="#t-stop"/></svg></button>
      <i class="sep"></i>
      <button><svg><use href="#t-mail"/></svg>Доставить почту<b></b></button>
      <i class="sep"></i>
      <button aria-label="Адреса"><svg><use href="#t-book"/></svg></button>
      <button aria-label="Найти"><svg><use href="#t-find"/></svg><b></b></button>
      <button class="more">»</button>
    </div>
    <div class="mail">
      <aside class="folders">
        <div class="folders-head">Папки<button class="x" aria-label="Закрыть панель"></button></div>
        <ul>
          <li><svg><use href="#oexpress"/></svg>Outlook Express</li>
          <li class="l1"><i class="exp minus"></i><svg><use href="#f-local"/></svg>Локальные папки</li>
          <li class="l2"><svg><use href="#f-box"/></svg><strong>Входящие</strong><em>(4239)</em></li>
          <li class="l2"><svg><use href="#f-out"/></svg>Исходящие</li>
          <li class="l2"><svg><use href="#f-box"/></svg>Отправленные</li>
          <li class="l2"><svg><use href="#f-del"/></svg>Удаленные</li>
          <li class="l2"><svg><use href="#f-box"/></svg>Черновики</li>
          <li class="l1"><i class="exp minus"></i><svg><use href="#f-news"/></svg>ddt.demos.su</li>
          <li class="l2"><svg><use href="#f-news"/></svg><strong>fido7.ru.space</strong><em>(351)</em></li>
          <li class="l2"><svg><use href="#f-news"/></svg><strong>fido7.ru.space.news</strong><em>(76</em></li>
          <li class="l2"><svg><use href="#f-news"/></svg><strong class="sel">fido7.ru.windows.xp</strong><em>(11</em></li>
        </ul>
      </aside>
      <div class="messages">
        <div class="view msglist">
          <div class="scrolled">
            <div class="clip">
            <table class="list msgs">
              <thead><tr><th aria-label="Вложение"><svg viewBox="0 0 16 16"><path d="M5 5v6c0 4 6 4 6 0V4c0-3-4-3-4 0v7c0 1 2 1 2 0V5" fill="none" stroke="#111" stroke-width="1.200"/></svg></th><th>Тема</th><th>От</th><th>Отправлено <small class="gap">▽</small></th></tr></thead>
              <tbody>
                <tr><td></td><td><svg><use href="#m-msg"/></svg>Re: windows 2010</td><td>Vitaly Zaitsev</td><td>05.08.2015 2:35</td></tr>
                <tr><td></td><td><svg><use href="#m-msg"/></svg>windows 2010</td><td>Oleg Pevzner</td><td>05.08.2015 2:04</td></tr>
                <tr><td></td><td><svg><use href="#m-msg"/></svg>windows 2010</td><td>Oleg Pevzner</td><td>05.08.2015 2:01</td></tr>
                <tr class="cur"><td></td><td><svg><use href="#m-cur"/></svg>windows 2010</td><td>Eugene Muzychenko</td><td>04.08.2015 23:32</td></tr>
                <tr><td></td><td><svg><use href="#m-msg"/></svg>windows 2010</td><td>Eugene Muzychenko</td><td>04.08.2015 23:30</td></tr>
                <tr><td></td><td><svg><use href="#m-msg"/></svg>windows 2010</td><td>Eugene Muzychenko</td><td>04.08.2015 23:24</td></tr>
                <tr><td></td><td><svg><use href="#m-msg"/></svg>windows 2010</td><td>Eugene Muzychenko</td><td>04.08.2015 23:22</td></tr>
                <tr><td></td><td><svg viewBox="0 0 16 16"><use href="#m-msg"/><path d="M12 8l3 4-3 4-5-4z" fill="#a010a8"/></svg>windows 2010</td><td>Eugene Muzychenko</td><td>04.08.2015 23:15</td></tr>
              </tbody>
            </table>
            </div>
            <div class="scroll"><button class="up" aria-label="Вверх"></button><i class="thumb tiny"></i><button class="down" aria-label="Вниз"></button></div>
          </div>
          <div class="hscroll"><button class="left" aria-label="Влево"></button><i class="thumb"></i><button class="right" aria-label="Вправо"></button><i class="corner"></i></div>
        </div>
        <div class="view preview">
          <div class="head"><p><b>From:</b> Eugene Muzychenko &nbsp; <b>To:</b> fido7.ru.windows.xp</p><p><b>Subject:</b> windows 2010</p></div>
          <div class="scrolled">
            <div class="letter">
              <p>Привет!</p>
              <p>04 Aug 15 17:23, you wrote to Vladimir V. Shirjak:</p>
              <p>&nbsp;OP&gt; Не стоит сравнивать UAC с тем, что сделано в *nix'ах. Там это заложено<br>&nbsp;OP&gt; изначально, концептуально, во внутреннюю архитектуру.</p>
            </div>
            <div class="scroll flat"><i></i><b></b><i></i></div>
          </div>
        </div>
      </div>
    </div>
    <footer class="status"><span>Сообщений: 449, не прочитано: 276, не загружено: 8</span><span><svg><use href="#monitor"/></svg>Работа в сети</span><span><i class="grip"></i></span></footer>
  </section>

  <!-- Диспетчер устройств -->
  <section class="window win-devices">
    <header class="title"><svg><use href="#devroot"/></svg><h2>Диспетчер устройств</h2><button class="min" aria-label="Свернуть"></button><button class="max" aria-label="Развернуть"></button><button class="close" aria-label="Закрыть"></button></header>
    <nav class="menu"><button>Файл</button><button>Действие</button><button>Вид</button><button>Справка</button></nav>
    <div class="bar tools">
      <button aria-label="Назад"><svg><use href="#t-left"/></svg></button><button aria-label="Вперед"><svg><use href="#t-right"/></svg></button>
      <i class="sep"></i><button aria-label="Дерево"><svg><use href="#t-pane"/></svg></button>
      <i class="sep"></i><button aria-label="Справка"><svg viewBox="0 0 16 16"><path d="M2 0h12v16H2z" fill="#2b4fc0" stroke="#8098e0"/><text x="8" y="13" font-size="13" font-weight="bold" text-anchor="middle" fill="#fff">?</text></svg></button><button aria-label="Панель"><svg><use href="#t-pane"/></svg></button>
      <i class="sep"></i><button aria-label="Обновить"><svg><use href="#t-scan"/></svg></button>
    </div>
    <ul class="view tree">
      <li class="root"><i class="exp minus"></i><svg><use href="#devroot"/></svg>Home-PC</li>
      <li><i class="exp"></i><svg><use href="#d-bt"/></svg>Bluetooth</li>
      <li><i class="exp"></i><svg><use href="#d-dvd"/></svg>DVD-дисководы и дисководы компакт-дисков</li>
      <li><i class="exp"></i><svg><use href="#d-audio"/></svg>Аудиовходы и аудиовыходы</li>
      <li><i class="exp"></i><svg><use href="#d-batt"/></svg>Батареи</li>
      <li><i class="exp"></i><svg><use href="#d-video"/></svg>Видеоадаптеры</li>
      <li><i class="exp"></i><svg><use href="#d-disk"/></svg>Дисковые устройства</li>
      <li><i class="exp"></i><svg><use href="#d-audio"/></svg>Звуковые, игровые и видеоустройства</li>
      <li><i class="exp"></i><svg><use href="#d-key"/></svg>Клавиатуры</li>
      <li><i class="exp"></i><svg><use href="#monitor"/></svg>Компьютер</li>
      <li><i class="exp"></i><svg><use href="#d-ide"/></svg>Контроллеры IDE ATA/ATAPI</li>
      <li><i class="exp"></i><svg><use href="#d-usb"/></svg>Контроллеры USB</li>
      <li><i class="exp"></i><svg><use href="#d-stor"/></svg>Контроллеры запоминающих устройств</li>
      <li><i class="exp"></i><svg><use href="#d-mon"/></svg>Мониторы</li>
      <li><i class="exp"></i><svg><use href="#d-mouse"/></svg>Мыши и иные указывающие устройства</li>
      <li><i class="exp"></i><svg><use href="#d-print"/></svg>Очереди печати</li>
      <li><i class="exp"></i><svg><use href="#d-port"/></svg>Переносные устройства</li>
      <li><i class="exp"></i><svg><use href="#d-soft"/></svg>Программные устройства</li>
      <li><i class="exp"></i><svg><use href="#d-cpu"/></svg>Процессоры</li>
      <li><i class="exp"></i><svg><use href="#d-netad"/></svg>Сетевые адаптеры</li>
      <li><i class="exp"></i><svg><use href="#monitor"/></svg>Системные устройства</li>
      <li><i class="exp"></i><svg><use href="#d-hid"/></svg>Устройства HID (Human Interface Devices)</li>
      <li><i class="exp"></i><svg><use href="#d-img"/></svg>Устройства обработки изображений</li>
    </ul>
    <footer class="status"><span></span><span></span><span></span></footer>
  </section>

  <!-- Состояние сети -->
  <section class="window dialog win-status">
    <header class="title"><svg><use href="#signal"/></svg><h2>Состояние - Беспроводная сеть</h2><button class="close" aria-label="Закрыть"></button></header>
    <div class="tabs"><button class="on">Общие</button></div>
    <div class="panel">
      <h3>Подключение</h3>
      <dl class="conn">
        <dt>IPv4-подключение:</dt><dd>Интернет</dd>
        <dt>IPv6-подключение:</dt><dd>Без доступа к Интернету</dd>
        <dt>Состояние среды:</dt><dd>Подключено</dd>
        <dt>SSID:</dt><dd>Venera-LAN</dd>
        <dt>Длительность:</dt><dd>2 дней 18:52:28</dd>
        <dt>Скорость:</dt><dd>72.2 Мбит/с</dd>
      </dl>
      <div class="quality">Качество сигнала:<svg><use href="#signal"/></svg></div>
      <div class="row"><button class="btn">Сведения...</button><button class="btn wide">Свойства беспроводной сети</button></div>
      <h3>Активность</h3>
      <div class="activity"><span>Отправлено</span><i></i><svg class="pair" viewBox="0 0 44 40"><use href="#pc" x="12" y="0" width="26" height="30"/><use href="#pc" x="0" y="0" width="28" height="32"/><use href="#signal" x="22" y="20" width="20" height="20"/></svg><i></i><span>Принято</span></div>
      <div class="bytes"><span>Байт:</span><span>89 169 575</span><i></i><span>725 530 167</span></div>
      <div class="row last"><button class="btn"><svg><use href="#shield"/></svg>Свойства</button><button class="btn"><svg><use href="#shield"/></svg>Отключить</button><button class="btn">Диагностика</button></div>
    </div>
    <div class="actions"><button class="btn">Закрыть</button></div>
  </section>
</main>

<footer class="taskbar">
  <button class="startbtn"><svg><use href="#winlogo"/></svg>Пуск</button>
  <div class="quick">
    <button aria-label="Консоль"><svg viewBox="0 0 16 16"><path d="M0 2h16v12H0z" fill="#000" stroke="#888"/><path d="M3 6l3 2-3 2M8 11h5" stroke="#fff" fill="none"/></svg></button>
    <button aria-label="Outlook Express"><svg><use href="#oexpress"/></svg></button>
    <button aria-label="Firefox"><svg><use href="#firefox"/></svg></button>
    <button aria-label="Рабочий стол"><svg viewBox="0 0 16 16"><path d="M0 2h16v11H0z" fill="#2463b4"/><path d="M1 3l14 0-14 8z" fill="#5d9be0"/><path d="M0 12h16v2H0z" fill="#1a3f7c"/></svg></button>
  </div>
  <nav class="tasks">
    <button><svg><use href="#monitor"/></svg><span>Этот компьютер</span></button>
    <button><svg><use href="#folder"/></svg><span>C:\ProgramData\Microso...</span></button>
    <button class="on"><svg><use href="#oexpress"/></svg><span>fido7.ru.windows.xp - ...</span></button>
    <button><svg><use href="#windrive"/></svg><span>C:\</span></button>
    <button><svg><use href="#folder"/></svg><span>C:\Windows</span></button>
    <button><svg><use href="#windrive"/></svg><span>Свойства: Локальный ...</span></button>
    <button><svg><use href="#devroot"/></svg><span>Диспетчер устройств</span></button>
    <button><svg><use href="#signal"/></svg><span>Состояние - Беспровод...</span></button>
    <button><svg><use href="#net"/></svg><span>Сеть</span></button>
  </nav>
  <div class="tray">
    <svg viewBox="0 0 16 16"><path d="M2 1h7v6l-2 3v4H4v-4L2 7z" fill="#5c5f60"/><circle cx="11" cy="11" r="5" fill="#2fae3a"/><path d="M8 11l2 2 4-4" stroke="#fff" stroke-width="1.500" fill="none"/></svg>
    <svg viewBox="0 0 16 16"><path d="M4 13c-4 0-4-5-1-5 0-5 7-6 8-1 5 0 5 6 1 6z" fill="#fff" stroke="#8a8a8a"/></svg>
    <svg viewBox="0 0 16 16"><path d="M1 2h7v5H1zM9 2h5v12H9z" fill="#f4f4f4" stroke="#777"/><path d="M4 7v7h5" fill="none" stroke="#777"/></svg>
    <svg viewBox="0 0 16 16"><path d="M6 1h9v8H6z" fill="#5aaaf0" stroke="#1a5fc0"/><path d="M1 6h9v8H1z" fill="#fff" stroke="#1a6fd8" stroke-width="2"/></svg>
    <svg viewBox="0 0 16 16"><path d="M3 5h2l4-4v14l-4-4H3z" fill="#fff" stroke="#8a8a8a"/><path d="M12 4c2 3 2 5 0 8" fill="none" stroke="#8a8a8a"/></svg>
    <span>ENG</span><time>11:51</time>
  </div>
</footer>

</body>
</html>
```
FILE: styles.css
```css
*, *::before, *::after {
  box-sizing: border-box;
}
body {
  margin: 0;
  min-height: 100vh;
  display: flex;
  flex-direction: column;
  overflow: hidden;
  font: 7px/8px "DejaVu Sans Condensed", "Noto Sans", sans-serif;
  color: #111;
  background:
    radial-gradient(ellipse 44% 46% at 50% 46%, rgba(112, 164, 98, 1) 0%, rgba(84, 144, 92, .75) 45%, rgba(20, 100, 84, .35) 75%, rgba(0, 70, 70, 0) 100%),
    radial-gradient(ellipse 62% 64% at 53% 45%, #0f6a5c 0%, #09544c 50%, #023437 75%, #001217 100%);
}
button, input {
  font: inherit;
  color: inherit;
  margin: 0;
  padding: 0;
  border: 0;
  background: none;
}
a {
  color: inherit;
  text-decoration: none;
}
h2, h3, p, ul, dl, dd, figure {
  margin: 0;
  padding: 0;
  font-size: inherit;
}
ul {
  list-style: none;
}
i, em {
  font-style: normal;
}
svg {
  display: block;
  flex: none;
  width: 10px;
  height: 10px;
}
svg text {
  font-family: "DejaVu Sans Condensed", sans-serif;
}
svg .serif {
  font-family: "Liberation Serif", serif;
}
.sprite {
  position: absolute;
  width: 0;
  height: 0;
}
.faded {
  opacity: .5;
}

/* desktop */
.desktop {
  position: relative;
  flex: 1;
}
.shortcuts {
  display: grid;
  grid-template-columns: repeat(5, 47px) 144px repeat(3, 47px) 49px repeat(3, 47px);
  grid-auto-rows: 46px;
  padding-top: 4px;
  color: #e8f0f0;
}
.item {
  display: flex;
  flex-direction: column;
  align-items: center;
  text-align: center;
}
.item svg {
  width: 20px;
  height: 20px;
  margin-bottom: 3px;
}
.shortcuts .item {
  text-shadow: 1px 1px 1px #000;
}
.c1 { grid-column: 1; }
.c2 { grid-column: 2; }
.c3 { grid-column: 3; }
.c4 { grid-column: 4; }
.c5 { grid-column: 5; }
.c7 { grid-column: 7; }
.c8 { grid-column: 8; }
.c9 { grid-column: 9; }
.c11 { grid-column: 11; }
.c12 { grid-column: 12; }
.c13 { grid-column: 13; }
.r2 { grid-row: 2; }
.r3 { grid-row: 3; }
.r5 { grid-row: 5; }
.r6 { grid-row: 6; }
.r7 { grid-row: 7; }

/* windows */
.window {
  position: absolute;
  display: flex;
  flex-direction: column;
  padding: 1px 2px;
  background: #d4d0c8;
  border: 1px solid;
  border-color: #eceae6 #55534f #55534f #eceae6;
}
.win-computer { left: 121px; top: 54px; width: 156px; height: 151px; }
.win-network { left: 105px; top: 226px; width: 155px; height: 153px; }
.win-props { left: 304px; top: 73px; width: 229px; height: 291px; }
.win-windows { left: 571px; top: 79px; width: 300px; height: 261px; }
.win-c { left: 886px; top: 41px; width: 222px; height: 181px; }
.win-start { left: 905px; top: 243px; width: 206px; height: 151px; }
.win-outlook { left: 68px; top: 389px; width: 407px; height: 281px; }
.win-devices { left: 532px; top: 387px; width: 270px; height: 301px; }
.win-status { left: 837px; top: 418px; width: 230px; height: 276px; }

.title {
  display: flex;
  flex: none;
  align-items: center;
  gap: 1px;
  height: 12px;
  padding: 0 1px;
  color: #d4d0c8;
  background: linear-gradient(to right, #062a2e, #a6caca);
}
.active .title {
  color: #fff;
}
.title h2 {
  flex: 1;
  min-width: 0;
  margin-left: 1px;
  font-weight: bold;
  white-space: nowrap;
}
.title button {
  position: relative;
  width: 10px;
  height: 9px;
  background: #d4d0c8;
  border: 1px solid;
  border-color: #fff #444 #444 #fff;
}
.title .close {
  margin-left: 1px;
}
.min::after, .max::after {
  content: "";
  position: absolute;
  left: 1px;
  bottom: 1px;
  width: 4px;
  border-bottom: 1px solid #000;
}
.max::after {
  width: 6px;
  height: 6px;
  border: 1px solid #000;
}
.close::before, .close::after, .x::before, .x::after {
  content: "";
  position: absolute;
  left: 1px;
  top: 3px;
  width: 6px;
  height: 1px;
  background: #000;
  transform: rotate(45deg);
}
.close::after, .x::after {
  transform: rotate(-45deg);
}
.menu {
  display: flex;
  flex: none;
  align-items: center;
  gap: 10px;
  height: 14px;
  padding-left: 5px;
}
.dim {
  color: #96928a;
}
.more {
  font-size: 8px;
  font-weight: bold;
  color: #111;
}
.menu .more {
  margin: 0 0 4px -9px;
}
.view {
  flex: 1;
  min-height: 0;
  background: #fff;
  border: 1px solid;
  border-color: #77746e #f4f2ee #f4f2ee #77746e;
  overflow: hidden;
}
.icons {
  display: grid;
  grid-template-columns: repeat(auto-fill, 47px);
  grid-auto-rows: 44px;
  padding: 5px 2px 0;
}
.scrolled {
  display: flex;
}
.clip {
  flex: 1;
  min-width: 0;
  overflow: hidden;
}

.status {
  display: flex;
  flex: none;
  gap: 1px;
  height: 13px;
  padding-top: 1px;
}
.status span {
  display: flex;
  align-items: center;
  gap: 2px;
  white-space: nowrap;
  overflow: hidden;
  border: 1px solid;
  border-color: #8c8982 #f4f2ee #f4f2ee #8c8982;
}
.status span:last-child {
  flex: 1;
}
.win-computer .status span:first-child,
.win-network .status span:first-child { width: 46px; }
.win-windows .status span:nth-child(1) { width: 146px; }
.win-windows .status span:nth-child(2) { width: 44px; }
.win-c .status span:nth-child(1) { width: 64px; }
.win-c .status span:nth-child(2) { width: 48px; }
.win-start .status span:nth-child(1) { width: 49px; }
.win-start .status span:nth-child(2) { width: 46px; }
.win-outlook .status span:nth-child(1) { width: 184px; }
.win-outlook .status span:nth-child(2) { width: 86px; }
.win-devices .status span:nth-child(1) { width: 128px; }
.win-devices .status span:nth-child(2) { width: 82px; }
.grip {
  width: 8px;
  height: 8px;
  margin: 2px 0 0 auto;
  background: repeating-linear-gradient(135deg, #a5a29b 0 1px, #f4f2ee 1px 2px, #d4d0c8 2px 3px);
  clip-path: polygon(100% 0, 100% 100%, 0 100%);
}

/* scrollbars */
.scroll {
  display: flex;
  flex-direction: column;
  width: 10px;
  background: #ebe9e4;
}
.scroll button, .hscroll button, .thumb {
  flex: none;
  width: 10px;
  height: 10px;
  background: #d4d0c8;
  border: 1px solid;
  border-color: #f4f2ee #55534f #55534f #f4f2ee;
}
.scroll .down {
  margin-top: auto;
}
.up::after, .down::after, .left::after, .right::after, .list th b::after, .tools b::after {
  content: "";
  display: block;
  width: 0;
  margin: 0 auto;
  border: 2px solid transparent;
  border-top: 0;
  border-bottom: 2px solid #000;
}
.down::after, .list th b::after, .tools b::after {
  border-top: 2px solid #000;
  border-bottom: 0;
}
.left::after, .right::after {
  border: 2px solid transparent;
  border-left: 0;
  border-right: 3px solid #000;
}
.right::after {
  border-left: 3px solid #000;
  border-right: 0;
}
.scroll .short { height: 28px; }
.scroll .long { height: 73px; }
.scroll .tiny { height: 5px; }
.hscroll {
  display: flex;
  background: #ebe9e4;
}
.hscroll .thumb {
  width: 211px;
}
.hscroll .right {
  margin-left: auto;
}
.corner {
  width: 10px;
  background: #d4d0c8;
}

/* lists */
.list {
  width: 100%;
  table-layout: fixed;
  border-collapse: separate;
  border-spacing: 0;
}
.list th, .list td {
  padding: 0 0 0 3px;
  text-align: left;
  font-weight: normal;
  white-space: nowrap;
  overflow: hidden;
}
.list th {
  position: relative;
  height: 11px;
  background: #d4d0c8;
  border: 1px solid;
  border-color: #f4f2ee #55534f #55534f #f4f2ee;
}
.list th b {
  position: absolute;
  right: 0;
  top: 0;
  width: 8px;
  height: 10px;
  padding-top: 4px;
  border-left: 1px solid #55534f;
}
.list small {
  margin-left: 4px;
  font-size: 5px;
  color: #77746e;
}
.list .gap {
  margin-left: 8px;
}
.list svg {
  display: inline-block;
  vertical-align: middle;
  margin: -2px 1px -1px 0;
}
.list th svg {
  margin-left: -2px;
}
.files {
  height: 225px;
}
.list.files th {
  height: 12px;
}
.files td:first-child {
  padding-left: 5px;
}
.files th:nth-child(1) { width: 90px; }
.files th:nth-child(2) { width: 70px; }
.files th:nth-child(3) { width: 71px; }
.files th:nth-child(4) { width: 47px; }
.msgs {
  height: 96px;
}
.msgs th:nth-child(1) { width: 14px; }
.msgs th:nth-child(2) { width: 87px; }
.msgs th:nth-child(3) { width: 97px; }
.cur {
  background: #d4d0c8;
}

/* tool bars */
.bar {
  display: flex;
  flex: none;
  align-items: center;
  height: 15px;
  border-bottom: 1px solid #8c8982;
}
.handle {
  width: 2px;
  height: 11px;
  margin-left: 3px;
  border: 1px solid;
  border-color: #fff #8c8982 #8c8982 #fff;
}
.logo {
  width: 14px;
  height: 14px;
  margin-left: auto;
}
.tools button {
  display: flex;
  align-items: center;
  gap: 1px;
  margin-left: 5px;
  white-space: nowrap;
}
.tools b {
  margin: 0 0 0 6px;
}
.tools .more {
  margin: 0 2px 4px auto;
}
.sep {
  width: 2px;
  height: 12px;
  margin-left: 6px;
  border-left: 1px solid #8c8982;
  border-right: 1px solid #fff;
}

/* outlook */
.win-outlook .tools {
  height: 17px;
}
.mail {
  display: flex;
  flex: 1;
  gap: 2px;
  min-height: 0;
  padding-top: 2px;
}
.folders {
  width: 122px;
  background: #fff;
  border: 1px solid;
  border-color: #77746e #f4f2ee #f4f2ee #77746e;
  overflow: hidden;
}
.folders-head {
  display: flex;
  justify-content: space-between;
  padding: 1px 3px 2px;
  background: #d4d0c8;
  border-bottom: 1px solid #8c8982;
}
.x {
  position: relative;
  width: 8px;
  height: 8px;
}
.folders ul {
  display: grid;
  height: 124px;
}
.folders li {
  display: flex;
  align-items: center;
  gap: 2px;
  padding-left: 1px;
  white-space: nowrap;
}
.folders .l1 {
  padding-left: 4px;
}
.folders .l2 {
  padding-left: 25px;
}
.folders .l2::before {
  content: "";
  width: 7px;
  align-self: stretch;
  margin: 0 -2px 0 -7px;
  border-left: 1px dotted #aaa;
  background: linear-gradient(#bbb, #bbb) 0 50% / 100% 1px no-repeat;
}
.folders em {
  color: #1a1ae0;
}
.sel {
  padding: 1px;
  margin: 0 -1px;
  color: #fff;
  background: #26404e;
}
.exp {
  flex: none;
  width: 7px;
  height: 7px;
  border: 1px solid #999;
  background:
    linear-gradient(#222, #222) center / 3px 1px no-repeat,
    linear-gradient(#222, #222) center / 1px 3px no-repeat;
}
.minus {
  background: linear-gradient(#222, #222) center / 3px 1px no-repeat;
}
.messages {
  display: flex;
  flex-direction: column;
  flex: 1;
  min-width: 0;
  gap: 2px;
}
.msglist {
  flex: none;
}
.preview {
  display: flex;
  flex-direction: column;
}
.preview .scrolled {
  flex: 1;
  min-height: 0;
}
.head {
  padding: 2px 2px 3px;
  background: #d4d0c8;
  border: 1px solid;
  border-color: #f4f2ee #8c8982 #8c8982 #f4f2ee;
}
.head p {
  line-height: 10px;
}
.letter {
  flex: 1;
  padding: 8px 6px 0;
  font-size: 8px;
  line-height: 10px;
}
.letter p {
  margin-bottom: 10px;
}
.flat {
  justify-content: space-between;
  padding: 8px 1px;
  background: #f4f3f0;
}
.flat i {
  width: 7px;
  height: 9px;
  background: #fff;
  border: 1px solid #bbb;
}
.flat b {
  height: 12px;
  margin: -22px -1px 0;
  background: #cfcdc8;
}

/* device manager */
.win-devices .menu {
  height: 16px;
  border-bottom: 1px solid #8c8982;
}
.win-devices .bar {
  margin-bottom: 1px;
}
.tree {
  padding-top: 1px;
}
.tree li {
  display: flex;
  align-items: center;
  gap: 2px;
  height: 10px;
  padding-left: 17px;
}
.tree .root {
  padding-left: 5px;
}

/* dialogs */
.tabs {
  display: flex;
  align-items: flex-end;
  margin: 5px 3px 0;
}
.tabs button {
  height: 11px;
  padding: 0 2px;
  border: 1px solid;
  border-color: #f4f2ee #55534f transparent #f4f2ee;
  border-radius: 1px 1px 0 0;
}
.tabs .on {
  height: 13px;
  padding: 0 4px 1px;
  margin-bottom: -1px;
  background: #d4d0c8;
  border-bottom: 0;
}
.panel {
  margin: 0 2px 0 3px;
  padding: 0 8px;
  flex: 1;
  min-height: 0;
  border: 1px solid;
  border-color: #f4f2ee #55534f #55534f #f4f2ee;
}
.actions {
  display: flex;
  justify-content: flex-end;
  gap: 3px;
  margin: 4px 2px 5px;
}
.btn {
  display: flex;
  align-items: center;
  justify-content: center;
  gap: 2px;
  min-width: 48px;
  height: 14px;
  padding: 0 4px;
  white-space: nowrap;
  background: #d4d0c8;
  border: 1px solid;
  border-color: #f4f2ee #55534f #55534f #f4f2ee;
}
.btn:disabled {
  color: #96928a;
  text-shadow: 1px 1px 0 #fff;
}
hr {
  margin: 0;
  border: 0;
  border-top: 1px solid #8c8982;
  border-bottom: 1px solid #f4f2ee;
}
.vol {
  display: flex;
  align-items: center;
  justify-content: space-between;
  padding: 10px 0 5px;
}
.vol svg {
  width: 18px;
  height: 18px;
}
.vol input, .check input {
  width: 154px;
  height: 14px;
  background: #fff;
  border: 1px solid;
  border-color: #55534f #f4f2ee #f4f2ee #55534f;
}
.facts {
  display: grid;
  grid-template-columns: 68px 1fr;
  row-gap: 5px;
  padding: 5px 0 4px;
}
.usage {
  width: 100%;
  border-spacing: 0;
}
.usage td, .usage th {
  height: 13px;
  padding: 0;
  font-weight: normal;
  text-align: left;
}
.usage:not(.total) {
  margin: 2px 0 5px;
}
.total {
  margin-top: 1px;
}
.usage td:nth-child(1) { width: 13px; }
.usage th { width: 48px; }
.usage td:nth-child(3) { width: 77px; text-align: right; }
.usage td:nth-child(4) { padding-left: 18px; }
.usage i {
  display: block;
  width: 10px;
  height: 10px;
}
.used { background: #00f; }
.free { background: #f0f; }
.chart {
  display: flex;
  justify-content: flex-end;
  align-items: flex-end;
  gap: 8px;
  padding: 3px 0;
}
.chart figure {
  text-align: center;
}
.chart figure svg {
  width: 78px;
  height: 40px;
  margin-bottom: 4px;
}
.chart .btn {
  width: 57px;
}
.check {
  display: flex;
  gap: 3px;
  margin-top: 7px;
}
.panel hr + .check {
  margin-top: 19px;
}
.check input {
  appearance: none;
  flex: none;
  width: 8px;
  height: 8px;
}

.win-status .panel {
  padding: 9px 9px 0 8px;
}
h3 {
  display: flex;
  align-items: center;
  gap: 3px;
  font-weight: normal;
}
h3::after {
  content: "";
  flex: 1;
  border-top: 1px solid #8c8982;
  border-bottom: 1px solid #f4f2ee;
}
.conn {
  display: grid;
  grid-template-columns: auto auto;
  row-gap: 3px;
  padding: 4px 9px 0 10px;
}
.conn dd {
  text-align: right;
}
.quality {
  display: flex;
  align-items: center;
  justify-content: space-between;
  padding: 3px 7px 1px 10px;
}
.quality svg {
  width: 20px;
  height: 18px;
}
.row {
  display: flex;
  gap: 3px;
  padding-left: 10px;
  margin-bottom: 6px;
}
.row .wide {
  width: 109px;
}
.activity {
  display: flex;
  align-items: center;
  justify-content: flex-end;
  gap: 4px;
  padding-right: 9px;
}
.activity i {
  width: 12px;
  border-top: 1px solid #55534f;
}
.pair {
  width: 33px;
  height: 30px;
}
.bytes {
  display: grid;
  grid-template-columns: 20px 72px 36px 1fr;
  padding: 0 9px 0 10px;
  text-align: right;
}
.bytes span:first-child {
  text-align: left;
}
.bytes i {
  height: 8px;
  border-right: 1px solid #55534f;
  margin-right: 18px;
}
.last {
  margin-top: 22px;
}
.last .btn {
  min-width: 52px;
}

/* taskbar */
.taskbar {
  display: flex;
  align-items: center;
  flex: none;
  height: 17px;
  padding: 2px 2px 1px;
  background: #d4d0c8;
  border-top: 1px solid #f4f2ee;
}
.startbtn, .tasks button {
  display: flex;
  align-items: center;
  gap: 2px;
  height: 14px;
  padding: 0 1px;
  white-space: nowrap;
  border: 1px solid;
  border-color: #f4f2ee #55534f #55534f #f4f2ee;
}
.startbtn {
  gap: 1px;
  width: 34px;
  padding: 0;
  font-weight: bold;
}
.quick {
  display: flex;
  gap: 5px;
  width: 66px;
  padding-left: 4px;
}
.tasks {
  display: flex;
  flex: 1;
  gap: 1px;
}
.tasks button {
  flex: 1;
  min-width: 0;
  max-width: 100px;
}
.tasks .on {
  font-weight: bold;
  background: #f6f5f2;
  border-color: #55534f #f4f2ee #f4f2ee #55534f;
}
.tray {
  display: flex;
  align-items: center;
  gap: 2px;
  height: 14px;
  padding: 0 2px;
  border: 1px solid;
  border-color: #8c8982 #f4f2ee #f4f2ee #8c8982;
}
.tray span {
  margin: 0 7px 0 5px;
}
```
